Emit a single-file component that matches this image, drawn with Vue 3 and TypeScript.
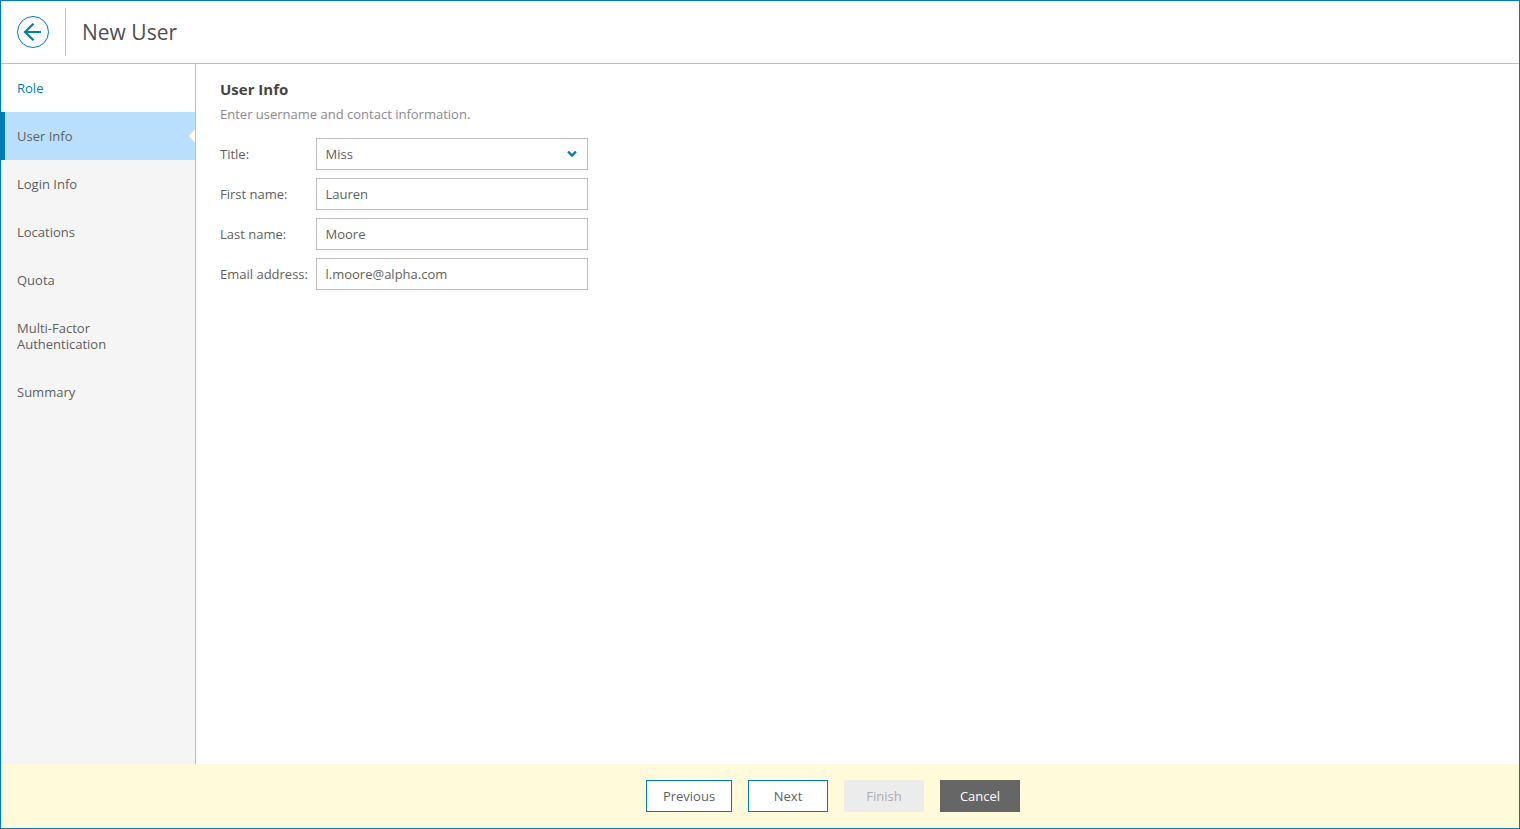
<script setup lang="ts">
interface Step { label: string; state: 'done' | 'active' | 'todo' }
const steps: Step[] = [
  { label: 'Role', state: 'done' },
  { label: 'User Info', state: 'active' },
  { label: 'Login Info', state: 'todo' },
  { label: 'Locations', state: 'todo' },
  { label: 'Quota', state: 'todo' },
  { label: 'Multi-Factor Authentication', state: 'todo' },
  { label: 'Summary', state: 'todo' },
]
const fields = [
  { label: 'First name:', value: 'Lauren' },
  { label: 'Last name:', value: 'Moore' },
  { label: 'Email address:', value: 'l.moore@alpha.com' },
]
</script>

<template>
  <div class="window">
    <header class="head">
      <button class="back" aria-label="Back">
        <svg width="32" height="32" viewBox="0 0 32 32" fill="none">
          <circle cx="16" cy="16" r="15.5" stroke="#007db8" stroke-width="1" />
          <path d="M8 16H24M16.5 7.8L8 16L16.5 24.2" stroke="#007db8" stroke-width="2.2" />
        </svg>
      </button>
      <div class="sep"></div>
      <h1 class="title">New User</h1>
    </header>
    <div class="middle">
      <nav class="nav">
        <div v-for="s in steps" :key="s.label" class="step" :class="s.state">
          <span class="step-label">{{ s.label }}</span>
        </div>
      </nav>
      <main class="content">
        <h2 class="heading">User Info</h2>
        <p class="sub">Enter username and contact information.</p>
        <div class="form">
          <label class="lbl">Title:</label>
          <div class="box select">
            <span>Miss</span>
            <svg width="10" height="8" viewBox="0 0 10 8" fill="none">
              <path d="M1 1.5L5 5.5L9 1.5" stroke="#007db8" stroke-width="2.4" />
            </svg>
          </div>
          <template v-for="f in fields" :key="f.label">
            <label class="lbl">{{ f.label }}</label>
            <div class="box">{{ f.value }}</div>
          </template>
        </div>
      </main>
    </div>
    <footer class="foot">
      <button class="btn outline prev">Previous</button>
      <button class="btn outline next">Next</button>
      <button class="btn disabled">Finish</button>
      <button class="btn dark">Cancel</button>
    </footer>
  </div>
</template>

<style>
html, body { margin: 0; background: #fff; }
</style>

<style scoped>
.window {
  box-sizing: border-box;
  width: 1520px;
  height: 829px;
  border: 1px solid #007db8;
  display: flex;
  flex-direction: column;
  font-family: "Open Sans", sans-serif;
  font-size: 13px;
  color: #5f5f5f;
  overflow: hidden;
}
.head {
  box-sizing: border-box;
  height: 63px;
  flex: none;
  display: flex;
  align-items: center;
  border-bottom: 1px solid #bfbfbf;
  padding-left: 16px;
}
.back {
  width: 32px;
  height: 32px;
  padding: 0;
  border: 0;
  background: none;
  display: block;
}
.back svg { display: block; }
.sep {
  width: 1px;
  height: 48px;
  background: #c4c4c4;
  margin-left: 16px;
  margin-right: 16px;
}
.title {
  margin: 0;
  font-size: 21px;
  font-weight: 400;
  color: #504f4f;
  line-height: 30px;
}
.middle { flex: 1; display: flex; min-height: 0; }
.nav {
  box-sizing: border-box;
  width: 195px;
  flex: none;
  background: #f5f5f5;
  border-right: 1px solid #bfbfbf;
}
.step {
  box-sizing: border-box;
  min-height: 48px;
  padding: 16px 16px;
  line-height: 16px;
  position: relative;
}
.step.done { background: #fff; color: #007db8; }
.step.active {
  background: #b9dffc;
  border-left: 4px solid #007db8;
  padding-left: 12px;
  color: #5f5f5f;
}
.step.active::after {
  content: "";
  position: absolute;
  right: 0;
  top: 17px;
  width: 0;
  height: 0;
  border-top: 7px solid transparent;
  border-bottom: 7px solid transparent;
  border-right: 6px solid #fff;
}
.step-label { display: block; max-width: 110px; }
.content { flex: 1; padding: 13px 24px 0; }
.heading {
  margin: 0;
  font-size: 15px;
  font-weight: 700;
  line-height: 24px;
  color: #454545;
}
.sub { margin: 4px 0 0; line-height: 18px; color: #8a8a8a; }
.form {
  display: grid;
  grid-template-columns: 96px 272px;
  grid-auto-rows: 32px;
  row-gap: 8px;
  margin-top: 15px;
  align-items: center;
}
.lbl { white-space: nowrap; }
.box {
  box-sizing: border-box;
  height: 32px;
  border: 1px solid #bfbfbf;
  padding: 0 8.5px;
  line-height: 30px;
  background: #fff;
}
.select {
  display: flex;
  align-items: center;
  justify-content: space-between;
  padding-right: 10px;
}
.foot {
  height: 64px;
  flex: none;
  box-sizing: border-box;
  background: #fffad9;
  display: flex;
  align-items: center;
  gap: 16px;
  padding-left: 645px;
}
.btn {
  box-sizing: border-box;
  height: 32px;
  width: 80px;
  padding: 0;
  border: 1px solid transparent;
  font: inherit;
  display: block;
}
.prev { width: 86px; }
.outline { background: #fff; border-color: #007db8; color: #5f5f5f; }
.disabled { background: #ececec; border-color: #ececec; color: #adadad; }
.dark { background: #666; border-color: #666; color: #fff; }
</style>
